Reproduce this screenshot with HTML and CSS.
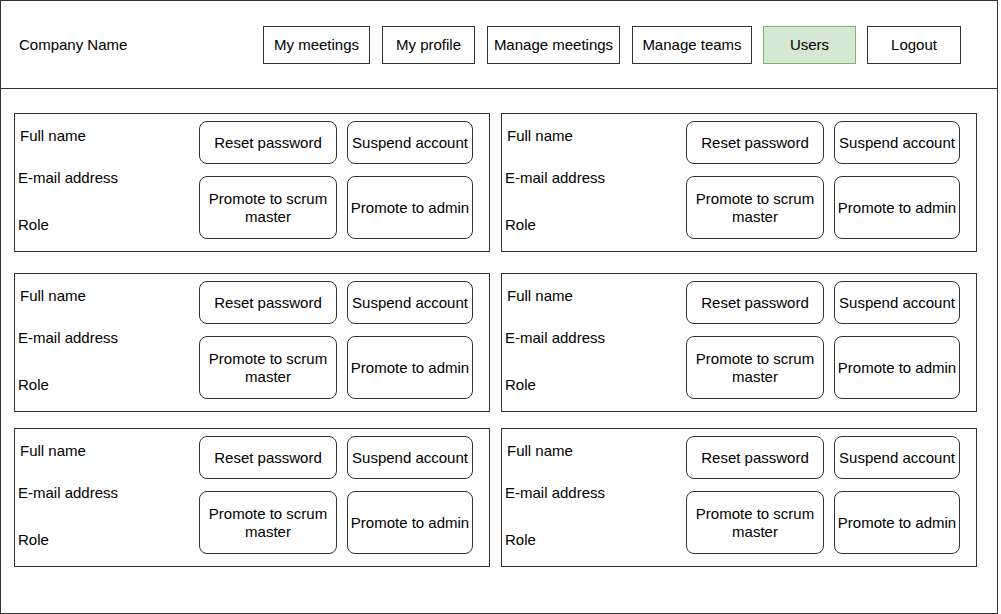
FILE: index.html
```html
<!DOCTYPE html>
<html lang="en">
<head>
<meta charset="utf-8">
<title>Users</title>
<link rel="stylesheet" href="styles.css">
</head>
<body>
<div class="frame">
  <header class="header">
    <div class="brand">Company Name</div>
    <nav class="nav">
      <a class="nav-btn nav-btn--meetings">My meetings</a>
      <a class="nav-btn nav-btn--profile">My profile</a>
      <a class="nav-btn nav-btn--manage-meetings">Manage meetings</a>
      <a class="nav-btn nav-btn--teams">Manage teams</a>
      <a class="nav-btn nav-btn--users nav-btn--active">Users</a>
      <a class="nav-btn nav-btn--logout">Logout</a>
    </nav>
  </header>
  <main class="grid">
    <section class="card card--first-row">
      <div class="info">
        <div class="info-name">Full name</div>
        <div class="info-email">E-mail address</div>
        <div class="info-role">Role</div>
      </div>
      <div class="actions">
        <button class="act">Reset password</button>
        <button class="act">Suspend account</button>
        <button class="act">Promote to scrum master</button>
        <button class="act">Promote to admin</button>
      </div>
    </section>
    <section class="card card--first-row">
      <div class="info">
        <div class="info-name">Full name</div>
        <div class="info-email">E-mail address</div>
        <div class="info-role">Role</div>
      </div>
      <div class="actions">
        <button class="act">Reset password</button>
        <button class="act">Suspend account</button>
        <button class="act">Promote to scrum master</button>
        <button class="act">Promote to admin</button>
      </div>
    </section>
    <section class="card">
      <div class="info">
        <div class="info-name">Full name</div>
        <div class="info-email">E-mail address</div>
        <div class="info-role">Role</div>
      </div>
      <div class="actions">
        <button class="act">Reset password</button>
        <button class="act">Suspend account</button>
        <button class="act">Promote to scrum master</button>
        <button class="act">Promote to admin</button>
      </div>
    </section>
    <section class="card">
      <div class="info">
        <div class="info-name">Full name</div>
        <div class="info-email">E-mail address</div>
        <div class="info-role">Role</div>
      </div>
      <div class="actions">
        <button class="act">Reset password</button>
        <button class="act">Suspend account</button>
        <button class="act">Promote to scrum master</button>
        <button class="act">Promote to admin</button>
      </div>
    </section>
    <section class="card">
      <div class="info">
        <div class="info-name">Full name</div>
        <div class="info-email">E-mail address</div>
        <div class="info-role">Role</div>
      </div>
      <div class="actions">
        <button class="act">Reset password</button>
        <button class="act">Suspend account</button>
        <button class="act">Promote to scrum master</button>
        <button class="act">Promote to admin</button>
      </div>
    </section>
    <section class="card">
      <div class="info">
        <div class="info-name">Full name</div>
        <div class="info-email">E-mail address</div>
        <div class="info-role">Role</div>
      </div>
      <div class="actions">
        <button class="act">Reset password</button>
        <button class="act">Suspend account</button>
        <button class="act">Promote to scrum master</button>
        <button class="act">Promote to admin</button>
      </div>
    </section>
  </main>
</div>
</body>
</html>
```

FILE: styles.css
```css
* {
  box-sizing: border-box;
}

html, body {
  margin: 0;
  padding: 0;
  background: #ffffff;
}

body {
  font-family: "Liberation Sans", Arial, Helvetica, sans-serif;
  font-size: 15px;
  line-height: 17.5px;
  color: #000000;
}

.frame {
  width: 998px;
  height: 614px;
  border: 1px solid #333333;
}

.header {
  display: flex;
  align-items: flex-start;
  height: 88px;
  padding: 25px 0 0 18px;
  border-bottom: 1px solid #333333;
}

.brand {
  width: 244px;
  height: 38px;
  display: flex;
  align-items: center;
}

.nav {
  display: flex;
  gap: 12px;
}

.nav-btn {
  display: flex;
  align-items: center;
  justify-content: center;
  height: 38px;
  border: 1px solid #333333;
  background: #ffffff;
  color: #000000;
  text-decoration: none;
}

.nav-btn--meetings { width: 107px; }
.nav-btn--profile { width: 93px; }
.nav-btn--manage-meetings { width: 133px; }
.nav-btn--teams { width: 120px; }
.nav-btn--users { width: 93px; margin-left: -1px; }
.nav-btn--logout { width: 94px; margin-left: -1px; }

.nav-btn--active {
  background: #d5e8d4;
  border-color: #82b366;
}

.grid {
  display: grid;
  grid-template-columns: 476px 476px;
  column-gap: 11px;
  row-gap: 16px;
  padding: 24px 0 0 13px;
}

.card {
  display: flex;
  height: 139px;
  border: 1px solid #333333;
}

.card--first-row {
  margin-bottom: 5px;
}

.info {
  flex: 1;
  display: flex;
  flex-direction: column;
  padding-top: 13px;
}

.info-name {
  padding-left: 5px;
}

.info-email {
  margin-top: 24px;
  padding-left: 3px;
}

.info-role {
  margin-top: 30px;
  padding-left: 3px;
}

.actions {
  display: grid;
  grid-template-columns: 138px 126px;
  grid-template-rows: 43px 63px;
  column-gap: 10px;
  row-gap: 12px;
  padding: 7px 16px 0 0;
}

.act {
  font: inherit;
  color: #000000;
  background: #ffffff;
  border: 1px solid #333333;
  border-radius: 8px;
  padding: 0 2px;
  text-align: center;
  line-height: 17.5px;
}
```
